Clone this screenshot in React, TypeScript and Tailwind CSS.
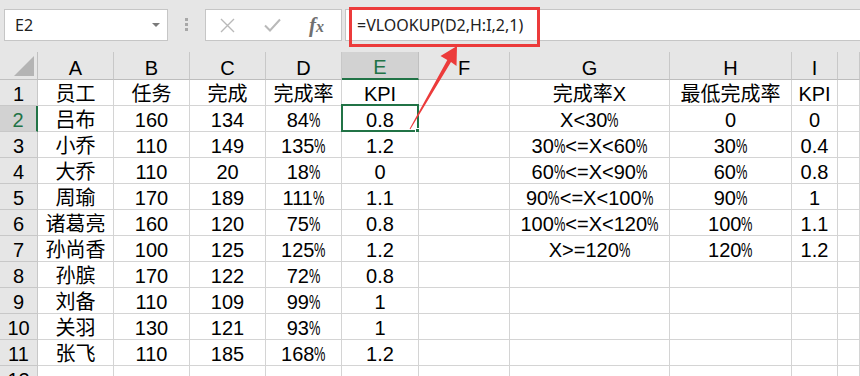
import React from "react";

const COLS = ["A", "B", "C", "D", "E", "F", "G", "H", "I", ""];

const DATA: string[][] = [
  ["员工", "任务", "完成", "完成率", "KPI", "", "完成率X", "最低完成率", "KPI", ""],
  ["吕布", "160", "134", "84%", "0.8", "", "X<30%", "0", "0", ""],
  ["小乔", "110", "149", "135%", "1.2", "", "30%<=X<60%", "30%", "0.4", ""],
  ["大乔", "110", "20", "18%", "0", "", "60%<=X<90%", "60%", "0.8", ""],
  ["周瑜", "170", "189", "111%", "1.1", "", "90%<=X<100%", "90%", "1", ""],
  ["诸葛亮", "160", "120", "75%", "0.8", "", "100%<=X<120%", "100%", "1.1", ""],
  ["孙尚香", "100", "125", "125%", "1.2", "", "X>=120%", "120%", "1.2", ""],
  ["孙膑", "170", "122", "72%", "0.8", "", "", "", "", ""],
  ["刘备", "110", "109", "99%", "1", "", "", "", "", ""],
  ["关羽", "130", "121", "93%", "1", "", "", "", "", ""],
  ["张飞", "110", "185", "168%", "1.2", "", "", "", "", ""],
  ["", "", "", "", "", "", "", "", "", ""],
];

function Txt({ s }: { s: string }) {
  const parts = s.split("%");
  return (
    <>
      {parts.map((p, i) => (
        <React.Fragment key={i}>
          {p}
          {i < parts.length - 1 && (
            <span className="inline-block w-[11.5px] origin-left scale-x-[0.64]">%</span>
          )}
        </React.Fragment>
      ))}
    </>
  );
}

export default function App() {
  return (
    <div
      className="relative w-[860px] h-[376px] overflow-hidden bg-[#e6e6e6] text-black"
      style={{ fontFamily: '"Liberation Sans", "Noto Sans CJK SC", sans-serif' }}
    >
      {/* Formula bar */}
      <div className="h-[52px] flex items-start pt-[9px]">
        <div className="ml-[4px] w-[164px] h-[32px] bg-white border border-[#c6c6c6] flex items-center justify-between pl-[10px] pr-[7px]">
          <span className="text-[16px] text-[#222]" style={{ fontFamily: '"Noto Sans", sans-serif' }}>
            E2
          </span>
          <svg width="8" height="4" viewBox="0 0 8 4">
            <path d="M0 0 L8 0 L4 4 Z" fill="#7a7a7a" />
          </svg>
        </div>
        <div className="ml-[17px] mt-[9px] flex flex-col gap-[2px]">
          <div className="w-[3px] h-[3px] bg-[#a8a8a8]" />
          <div className="w-[3px] h-[3px] bg-[#a8a8a8]" />
          <div className="w-[3px] h-[3px] bg-[#a8a8a8]" />
        </div>
        <div className="ml-[17px] w-[137px] h-[32px] bg-white border border-[#c6c6c6] flex items-center">
          <svg className="ml-[14px]" width="15" height="15" viewBox="0 0 15 15">
            <path d="M1 1 L14 14 M14 1 L1 14" stroke="#b9b9b9" strokeWidth="1.4" />
          </svg>
          <svg className="ml-[29px]" width="17" height="14" viewBox="0 0 17 14">
            <path d="M1 7.5 L6 12.5 L16 1.5" stroke="#b9b9b9" strokeWidth="2" fill="none" />
          </svg>
          <span
            className="ml-[28px] text-[21px] italic font-bold text-[#707070] leading-none"
            style={{ fontFamily: '"Liberation Serif", serif' }}
          >
            f<span className="text-[16px]">x</span>
          </span>
        </div>
        <div className="ml-[3px] flex-1 h-[32px] bg-white border-y border-l border-[#c6c6c6] flex items-center pl-[11px]">
          <span className="text-[16px] text-[#222]" style={{ fontFamily: '"Noto Sans", sans-serif' }}>
            =VLOOKUP(D2,H:I,2,1)
          </span>
        </div>
      </div>

      {/* Grid */}
      <div className="grid grid-cols-[38px_76px_76px_76px_76px_77px_91px_160px_122px_46px_1fr] text-[20px] leading-none">
        {/* header row */}
        <div className="h-[28px] border-r border-b border-[#c0c0c0] bg-[#e6e6e6] relative">
          <svg className="absolute right-[3px] bottom-[3px]" width="20" height="20" viewBox="0 0 20 20">
            <path d="M20 0 L20 20 L0 20 Z" fill="#b4b4b4" />
          </svg>
        </div>
        {COLS.map((c, i) =>
          c === "E" ? (
            <div
              key={i}
              className="h-[28px] bg-[#d2d2d2] border-r border-[#c0c0c0] border-b-2 border-b-[#217346] text-[#217346] flex items-center justify-center pt-[4px]"
            >
              {c}
            </div>
          ) : (
            <div
              key={i}
              className="h-[28px] bg-[#e6e6e6] border-r border-b border-[#c8c8c8] border-b-[#bdbdbd] flex items-center justify-center pt-[4px]"
            >
              {c}
            </div>
          )
        )}
        {DATA.map((row, r) => (
          <React.Fragment key={r}>
            {r === 1 ? (
              <div className="h-[26px] bg-[#d2d2d2] border-r-2 border-r-[#217346] border-b border-b-[#c8c8c8] text-[#217346] flex items-center justify-center pt-[2px]">
                {r + 1}
              </div>
            ) : (
              <div className="h-[26px] bg-[#e6e6e6] border-r border-b border-[#c8c8c8] flex items-center justify-center pt-[2px]">
                {r + 1}
              </div>
            )}
            {row.map((v, c) => (
              <div
                key={c}
                className="relative h-[26px] bg-white border-r border-b border-[#d4d4d4] flex items-center justify-center whitespace-nowrap pt-[2px]"
              >
                <Txt s={v} />
                {r === 1 && c === 4 && (
                  <>
                    <div className="absolute -left-[1px] -top-[2px] -right-[1px] -bottom-[1px] border-2 border-[#217346]" />
                    <div className="absolute -right-[4px] -bottom-[4px] w-[7px] h-[7px] bg-[#217346] border border-white" />
                  </>
                )}
              </div>
            ))}
          </React.Fragment>
        ))}
      </div>

      {/* Annotation: red box */}
      <div className="absolute left-[349px] top-[7px] w-[191px] h-[40px] border-[3px] border-[#ec3b3b]" />
      {/* Annotation: arrow */}
      <svg className="absolute left-0 top-0" width="860" height="376" viewBox="0 0 860 376">
        <polygon
          points="409.6,128.8 447.3,60 440.5,56 457,46 456.5,66 451,62 410.4,129.2"
          fill="#ec3b3b"
        />
      </svg>
    </div>
  );
}
